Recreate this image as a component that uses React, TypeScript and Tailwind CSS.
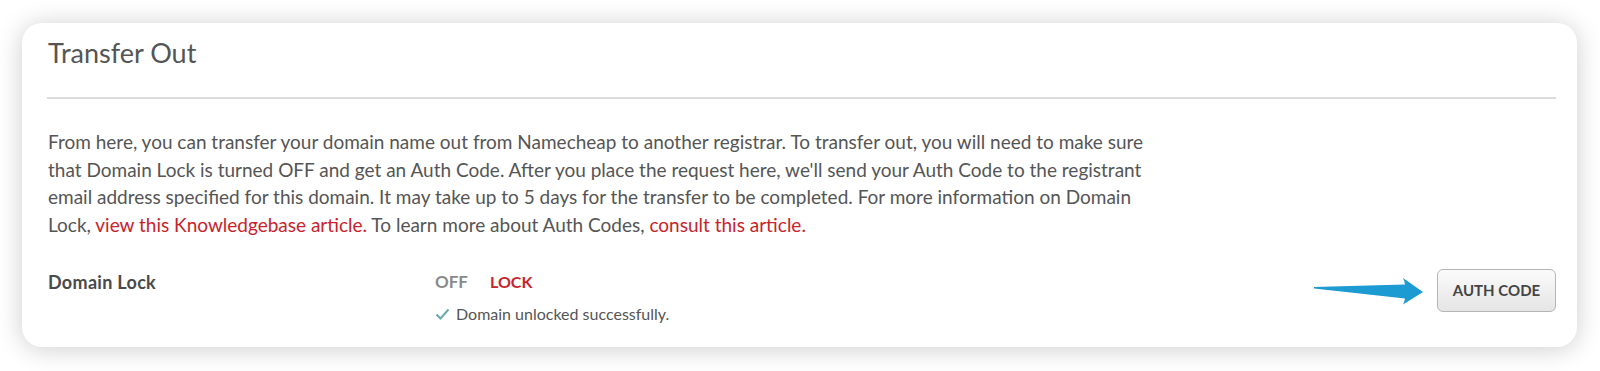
import React from 'react';

const font = { fontFamily: 'Lato, "Open Sans", sans-serif' };

function Arrow() {
  return (
    <svg width="114" height="32" viewBox="0 0 114 32" className="shrink-0">
      <path d="M2 12 L93 9.5 Q92.5 6 91 3 L111 17 L91 29.5 Q92.5 26.5 93 23.5 L2 13.6 Z" fill="#1c9bd3" />
    </svg>
  );
}

export default function App() {
  return (
    <div className="w-[1600px] h-[371px] bg-white pt-[23px] pl-[22px]" style={font}>
      <div className="w-[1555px] h-[324px] bg-white rounded-[20px] shadow-[0_2px_26px_rgba(0,0,0,0.2)] pl-[25px] pr-[21px] pt-[15px]">
        <h2 className="text-[27px] font-normal text-[#555] leading-[30px] pl-px">Transfer Out</h2>
        <div className="mt-[29px] h-[2px] bg-[#dcdcdc]" />
        <p className="mt-[29px] w-[1120px] text-[19px] leading-[27.5px] text-[#555] pl-px">
          From here, you can transfer your domain name out from Namecheap to another registrar. To transfer out, you will need to make sure that Domain Lock is turned OFF and get an Auth Code. After you place the request here, we'll send your Auth Code to the registrant email address specified for this domain. It may take up to 5 days for the transfer to be completed. For more information on Domain Lock,{' '}
          <a className="text-[#c8232b]">view this Knowledgebase article.</a> To learn more about Auth Codes,{' '}
          <a className="text-[#c8232b]">consult this article.</a>
        </p>
        <div className="mt-[31px] flex items-start">
          <div className="w-[388px] pl-px pt-px text-[18px] tracking-[0.3px] font-bold text-[#4a4a4a] leading-[24px]">Domain Lock</div>
          <div className="flex-1">
            <div className="flex items-center gap-[22px] pt-px leading-[24px]">
              <span className="text-[17px] font-bold text-[#8a8a8a]">OFF</span>
              <span className="text-[16px] font-bold text-[#c8232b]">LOCK</span>
            </div>
            <div className="mt-[10px] flex items-center gap-[6px] text-[16px] text-[#555] leading-[20px]">
              <svg width="15" height="12" viewBox="0 0 15 12">
                <path d="M1.5 6.5 L5.5 10.5 L13.5 1.5" fill="none" stroke="#6aa9aa" strokeWidth="2" />
              </svg>
              <span>Domain unlocked successfully.</span>
            </div>
          </div>
          <div className="flex items-center gap-[11px]">
            <Arrow />
            <button
              type="button"
              className="w-[119px] h-[43px] rounded-[6px] border border-[#b5b5b5] bg-gradient-to-b from-[#fbfbfb] to-[#e5e5e5] text-[15px] font-bold text-[#454545]"
            >
              AUTH CODE
            </button>
          </div>
        </div>
      </div>
    </div>
  );
}
